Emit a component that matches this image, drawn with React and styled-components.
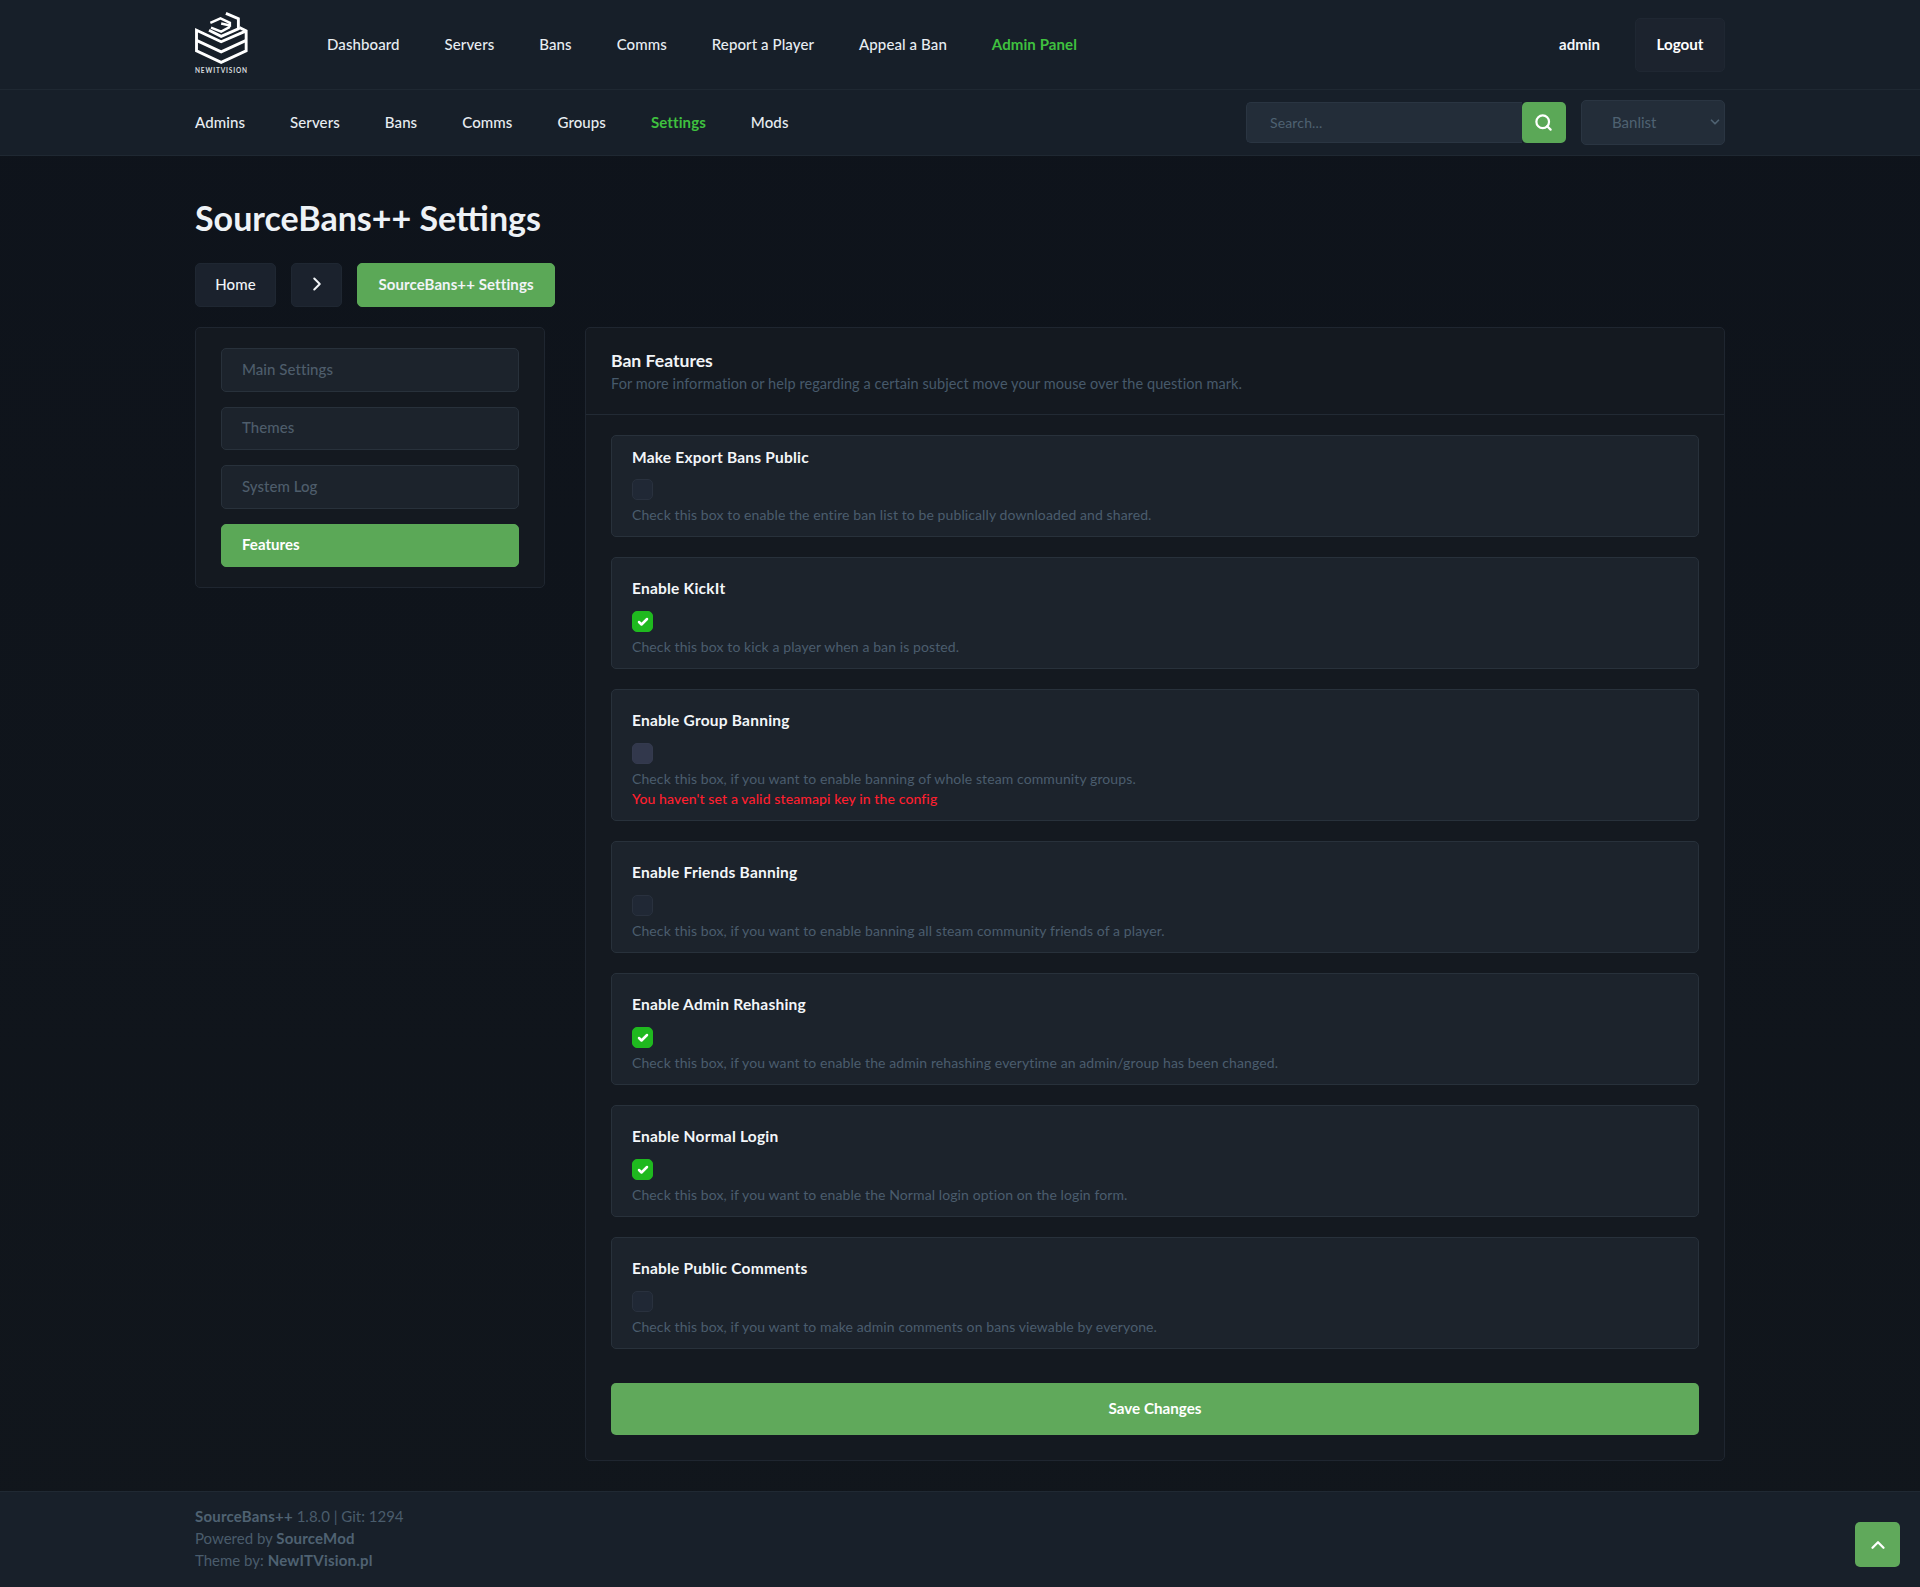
import React from "react";
import styled, { createGlobalStyle } from "styled-components";
import { Search, ChevronRight, ChevronUp, ChevronDown, Check } from "lucide-react";

const Global = createGlobalStyle`
  html, body { margin: 0; padding: 0; background: #0f141c; }
  body { font-family: "Lato", "Noto Sans", sans-serif; font-size: 15px; color: #fff; }
  * { box-sizing: border-box; }
`;

const Page = styled.div`
  width: 1920px;
  min-height: 1587px;
  display: flex;
  flex-direction: column;
  background: linear-gradient(#0e131b, #11161c);
`;
const Container = styled.div`
  width: 1530px;
  margin: 0 auto;
  display: flex;
  align-items: center;
`;
const TopBar = styled.header`
  height: 90px;
  background: #171f29;
  border-bottom: 1px solid #1f2832;
  display: flex;
`;
const SubBar = styled.nav`
  height: 66px;
  background: #171f29;
  border-bottom: 1px solid #1f2832;
  display: flex;
`;
const LogoBox = styled.div`
  width: 132px;
  padding-bottom: 2px;
  display: flex;
  flex-direction: column;
  align-items: flex-start;
`;
const LogoText = styled.span`
  font-size: 6.5px;
  font-weight: 700;
  letter-spacing: 0.85px;
  color: #d8dcdf;
  line-height: 8px;
  margin-top: 3px;
  white-space: nowrap;
`;
const NavList = styled.div`
  display: flex;
  gap: ${(p) => p.$gap}px;
  flex: 1;
  padding-bottom: 2px;
`;
const NavLink = styled.a`
  font-size: 15px;
  letter-spacing: 0.1px;
  white-space: nowrap;
  color: ${(p) => (p.$active ? "#3fc13f" : "#e8edf2")};
  font-weight: ${(p) => (p.$active ? 700 : 500)};
`;
const UserName = styled.span`
  font-weight: 700;
  font-size: 15px;
  margin-right: 35px;
  padding-bottom: 2px;
  color: #f3f6f9;
`;
const LogoutButton = styled.button`
  width: 90px;
  height: 54px;
  padding: 0 0 2px;
  border: 1px solid #1f2732;
  border-radius: 5px;
  background: #1c232e;
  color: #fff;
  font: 700 15.2px "Lato", sans-serif;
`;
const SearchGroup = styled.div`
  display: flex;
  width: 320px;
  height: 41px;
  margin-right: 15px;
`;
const SearchInput = styled.div`
  flex: 1;
  background: #232d39;
  border: 1px solid #2a3542;
  border-right: none;
  border-radius: 5px 0 0 5px;
  color: #4f6272;
  font-size: 14px;
  letter-spacing: 0.15px;
  display: flex;
  align-items: center;
  padding: 0 0 1px 23px;
`;
const SearchButton = styled.button`
  width: 44px;
  border: none;
  border-radius: 5px;
  background: #5ba857;
  color: #fff;
  display: flex;
  align-items: center;
  justify-content: center;
  padding: 0 1px 1px 0;
`;
const SelectBox = styled.div`
  width: 144px;
  height: 45px;
  background: #232d39;
  border: 1px solid #2a3542;
  border-radius: 5px;
  color: #4f6272;
  font-size: 15px;
  display: flex;
  align-items: center;
  justify-content: space-between;
  padding: 0 2px 2px 30px;
`;
const Main = styled.main`
  width: 1530px;
  margin: 0 auto;
  flex: 1;
`;
const PageTitle = styled.h1`
  margin: 0;
  padding-top: 40px;
  height: 107px;
  font-size: 34px;
  line-height: 44px;
  font-weight: 700;
  color: #eef2f6;
`;
const Crumbs = styled.div`
  display: flex;
  gap: 15px;
  height: 44px;
`;
const Crumb = styled.div`
  height: 44px;
  padding-bottom: 2px;
  display: flex;
  align-items: center;
  justify-content: center;
  border-radius: 5px;
  font-size: 15px;
  letter-spacing: 0.1px;
  width: ${(p) => p.$w}px;
  background: ${(p) => (p.$active ? "#5ba857" : "#1b222d")};
  border: 1px solid ${(p) => (p.$active ? "#5ba857" : "#1f2732")};
  font-weight: ${(p) => (p.$active ? 700 : 500)};
  color: #f1f4f7;
`;
const Columns = styled.div`
  display: grid;
  grid-template-columns: 350px 1140px;
  gap: 40px;
  margin-top: 20px;
  align-items: start;
`;
const SidePanel = styled.aside`
  background: #141920;
  border: 1px solid #1f2630;
  border-radius: 5px;
  padding: 20px 25px 20px;
  height: 261px;
  display: flex;
  flex-direction: column;
  gap: 15px;
`;
const SideItem = styled.div`
  height: 43.5px;
  display: flex;
  align-items: center;
  padding: 0 0 2px 20px;
  border-radius: 5px;
  font-size: 15px;
  letter-spacing: 0.05px;
  background: ${(p) => (p.$active ? "#5ba857" : "#1c232c")};
  border: 1px solid ${(p) => (p.$active ? "#5ba857" : "#28313b")};
  color: ${(p) => (p.$active ? "#fff" : "#4e5d6b")};
  font-weight: ${(p) => (p.$active ? 700 : 500)};
`;
const ContentPanel = styled.section`
  background: #141920;
  border: 1px solid #1f2630;
  border-radius: 5px;
  height: 1134px;
`;
const PanelHead = styled.div`
  height: 87px;
  border-bottom: 1px solid #222a34;
  padding: 21px 25px 0;
`;
const PanelTitle = styled.div`
  font-size: 17.6px;
  line-height: 23px;
  font-weight: 700;
  color: #f1f4f7;
`;
const PanelSub = styled.div`
  font-size: 14.5px;
  letter-spacing: 0.07px;
  line-height: 23px;
  color: #475a6b;
`;
const PanelBody = styled.div`
  padding: 20px 25px 0;
  display: flex;
  flex-direction: column;
  gap: 20px;
`;
const Row = styled.div`
  background: #1c232c;
  border: 1px solid #28313b;
  border-radius: 5px;
  padding: ${(p) => (p.$compact ? 11 : 20)}px 20px 11px;
  display: flex;
  flex-direction: column;
`;
const RowTitle = styled.div`
  font-size: 15.5px;
  letter-spacing: 0.22px;
  line-height: 21px;
  font-weight: 700;
  color: #f3f6f9;
`;
const Box = styled.div`
  width: 21px;
  height: 21px;
  margin-top: ${(p) => (p.$compact ? 11 : 12)}px;
  border-radius: 5px;
  display: flex;
  align-items: center;
  justify-content: center;
  color: #fff;
  background: ${(p) => (p.$checked ? "#1fb91f" : p.$hover ? "#32384c" : "#202835")};
  border: 1px solid ${(p) => (p.$checked ? "#1fb91f" : p.$hover ? "#343a4e" : "#29313e")};
`;
const RowDesc = styled.div`
  font-size: 14px;
  letter-spacing: 0.1px;
  line-height: 21px;
  margin-top: 4px;
  color: #4b5d6e;
`;
const RowError = styled.div`
  font-size: 14px;
  letter-spacing: 0.12px;
  line-height: 20px;
  font-weight: 500;
  color: #ff1f2f;
`;
const SaveButton = styled.button`
  display: block;
  width: 100%;
  height: 52px;
  margin-top: 14px;
  padding: 0 0 2px;
  background: #60a95b;
  border: none;
  border-radius: 5px;
  color: #fff;
  font: 700 15.2px "Lato", sans-serif;
`;
const Footer = styled.footer`
  height: 96px;
  margin-top: 30px;
  background: #18202a;
  border-top: 1px solid #202933;
  padding-top: 13px;
`;
const FooterInner = styled.div`
  width: 1530px;
  margin: 0 auto;
  font-size: 15px;
  line-height: 22px;
  color: #4a5c6c;
  b { font-weight: 700; color: #4f6272; letter-spacing: 0.2px; }
`;
const ToTop = styled.button`
  position: absolute;
  left: 1855px;
  top: 1522px;
  width: 45px;
  height: 45px;
  border: none;
  border-radius: 5px;
  background: #60a95b;
  color: #fff;
  display: flex;
  align-items: center;
  justify-content: center;
  padding: 0;
`;

const Logo = () => (
  <svg width="53" height="52" viewBox="45 38 156 154" fill="none" stroke="#fff" strokeWidth="8.5" strokeLinejoin="miter">
    <path d="M176 84 L196 94 V153 L122 187 L49 153 V92 L122 126 L196 94" />
    <path d="M49 122 L122 156 L196 122" />
    <path d="M136 42 L173 58 V88 L122 110 L86 92" />
    <path d="M90 70 L120 57 L148 70 V78 L122 72 M92 84 L122 96 L148 82" strokeWidth="7" />
  </svg>
);

const rows = [
  { t: "Make Export Bans Public", d: "Check this box to enable the entire ban list to be publically downloaded and shared.", compact: true },
  { t: "Enable KickIt", d: "Check this box to kick a player when a ban is posted.", checked: true },
  { t: "Enable Group Banning", d: "Check this box, if you want to enable banning of whole steam community groups.", hover: true, err: "You haven't set a valid steamapi key in the config" },
  { t: "Enable Friends Banning", d: "Check this box, if you want to enable banning all steam community friends of a player." },
  { t: "Enable Admin Rehashing", d: "Check this box, if you want to enable the admin rehashing everytime an admin/group has been changed.", checked: true },
  { t: "Enable Normal Login", d: "Check this box, if you want to enable the Normal login option on the login form.", checked: true },
  { t: "Enable Public Comments", d: "Check this box, if you want to make admin comments on bans viewable by everyone." },
];

export default function App() {
  return (
    <Page>
      <Global />
      <TopBar>
        <Container>
          <LogoBox>
            <Logo />
            <LogoText>NEWITVISION</LogoText>
          </LogoBox>
          <NavList $gap={44.95}>
            {["Dashboard", "Servers", "Bans", "Comms", "Report a Player", "Appeal a Ban"].map((n) => (
              <NavLink key={n}>{n}</NavLink>
            ))}
            <NavLink $active>Admin Panel</NavLink>
          </NavList>
          <UserName>admin</UserName>
          <LogoutButton>Logout</LogoutButton>
        </Container>
      </TopBar>
      <SubBar>
        <Container>
          <NavList $gap={45}>
            {["Admins", "Servers", "Bans", "Comms", "Groups"].map((n) => (
              <NavLink key={n}>{n}</NavLink>
            ))}
            <NavLink $active>Settings</NavLink>
            <NavLink>Mods</NavLink>
          </NavList>
          <SearchGroup>
            <SearchInput>Search...</SearchInput>
            <SearchButton><Search size={19} strokeWidth={2.8} /></SearchButton>
          </SearchGroup>
          <SelectBox>
            Banlist
            <ChevronDown size={14} strokeWidth={3} />
          </SelectBox>
        </Container>
      </SubBar>
      <Main>
        <PageTitle>SourceBans++ Settings</PageTitle>
        <Crumbs>
          <Crumb $w={81}>Home</Crumb>
          <Crumb $w={51}><ChevronRight size={22} strokeWidth={2.2} /></Crumb>
          <Crumb $w={198} $active>SourceBans++ Settings</Crumb>
        </Crumbs>
        <Columns>
          <SidePanel>
            <SideItem>Main Settings</SideItem>
            <SideItem>Themes</SideItem>
            <SideItem>System Log</SideItem>
            <SideItem $active>Features</SideItem>
          </SidePanel>
          <ContentPanel>
            <PanelHead>
              <PanelTitle>Ban Features</PanelTitle>
              <PanelSub>For more information or help regarding a certain subject move your mouse over the question mark.</PanelSub>
            </PanelHead>
            <PanelBody>
              {rows.map((r) => (
                <Row key={r.t} $compact={r.compact}>
                  <RowTitle>{r.t}</RowTitle>
                  <Box $compact={r.compact} $checked={r.checked} $hover={r.hover}>
                    {r.checked && <Check size={12} strokeWidth={5} />}
                  </Box>
                  <RowDesc>{r.d}</RowDesc>
                  {r.err && <RowError>{r.err}</RowError>}
                </Row>
              ))}
              <SaveButton>Save Changes</SaveButton>
            </PanelBody>
          </ContentPanel>
        </Columns>
      </Main>
      <Footer>
        <FooterInner>
          <div><b>SourceBans++</b> 1.8.0 | Git: 1294</div>
          <div>Powered by <b>SourceMod</b></div>
          <div>Theme by: <b>NewITVision.pl</b></div>
        </FooterInner>
      </Footer>
      <ToTop><ChevronUp size={22} strokeWidth={2.5} /></ToTop>
    </Page>
  );
}
